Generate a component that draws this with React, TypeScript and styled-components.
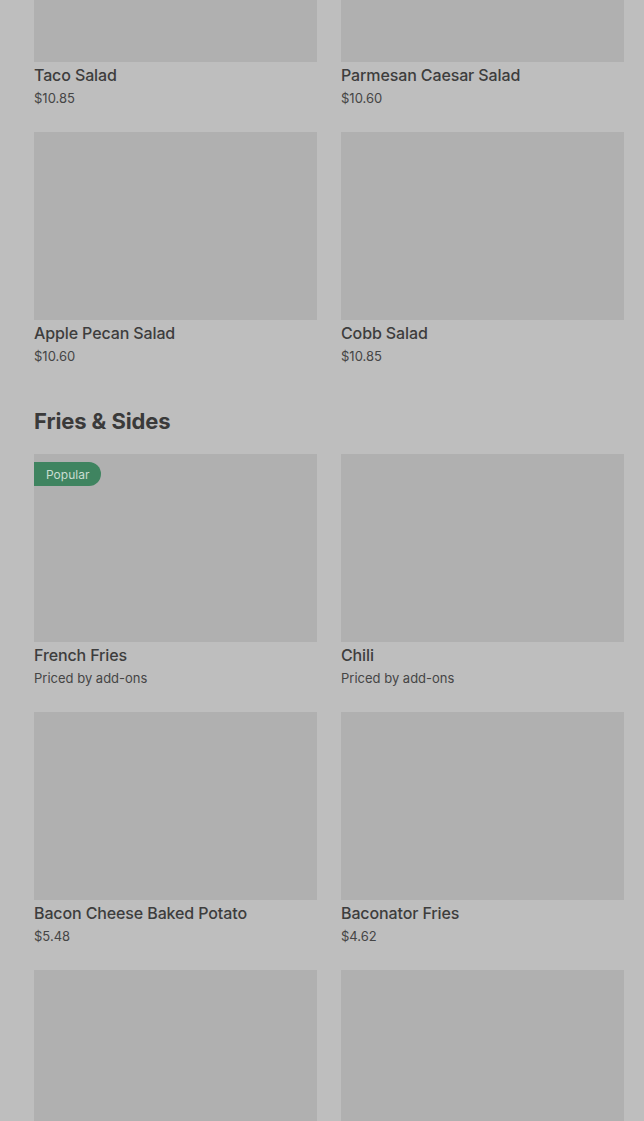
import React from "react";
import styled, { createGlobalStyle } from "styled-components";

const Global = createGlobalStyle`
  html, body { margin: 0; padding: 0; background: #bebebe; overflow: hidden; }
  body { font-family: Inter, "Noto Sans", Roboto, sans-serif; color: #3c3c3c; }
`;

const Page = styled.main`
  margin-top: -126px;
  padding: 0 20px 0 34px;
  display: flex;
  flex-direction: column;
`;

const Section = styled.section`
  display: flex;
  flex-direction: column;
`;

const Heading = styled.h2`
  margin: 41px 0 19px;
  font-size: 22px;
  line-height: 28px;
  font-weight: 700;
  letter-spacing: -0.1px;
  color: #3a3a3a;
`;

const Grid = styled.div`
  display: grid;
  grid-template-columns: 1fr 1fr;
  column-gap: 24px;
  row-gap: 24px;
`;

const Card = styled.div`
  display: flex;
  flex-direction: column;
`;

const Thumb = styled.div`
  position: relative;
  height: 188px;
  background: #b0b0b0;
`;

const Badge = styled.span`
  position: absolute;
  left: 0;
  top: 8px;
  height: 24px;
  padding: 0 12px;
  display: flex;
  align-items: center;
  background: #3f8460;
  color: #c9ddd1;
  font-size: 12px;
  border-radius: 0 12px 12px 0;
`;

const Title = styled.div`
  margin-top: 3px;
  font-size: 16px;
  line-height: 20px;
  font-weight: 500;
  letter-spacing: -0.12px;
  color: #3d3d3d;
`;

const Price = styled.div`
  margin-top: 3px;
  font-size: 13px;
  line-height: 20px;
  color: #454545;
`;

type Item = { name: string; price: string; popular?: boolean };

const salads: Item[] = [
  { name: "Taco Salad", price: "$10.85" },
  { name: "Parmesan Caesar Salad", price: "$10.60" },
  { name: "Apple Pecan Salad", price: "$10.60" },
  { name: "Cobb Salad", price: "$10.85" },
];

const sides: Item[] = [
  { name: "French Fries", price: "Priced by add-ons", popular: true },
  { name: "Chili", price: "Priced by add-ons" },
  { name: "Bacon Cheese Baked Potato", price: "$5.48" },
  { name: "Baconator Fries", price: "$4.62" },
  { name: "", price: "" },
  { name: "", price: "" },
];

const ItemCard = ({ item }: { item: Item }) => (
  <Card>
    <Thumb>{item.popular && <Badge>Popular</Badge>}</Thumb>
    {item.name && <Title>{item.name}</Title>}
    {item.price && <Price>{item.price}</Price>}
  </Card>
);

export default function App() {
  return (
    <>
      <Global />
      <Page>
        <Section>
          <Grid>
            {salads.map((it, i) => (
              <ItemCard key={i} item={it} />
            ))}
          </Grid>
        </Section>
        <Section>
          <Heading>Fries &amp; Sides</Heading>
          <Grid>
            {sides.map((it, i) => (
              <ItemCard key={i} item={it} />
            ))}
          </Grid>
        </Section>
      </Page>
    </>
  );
}
